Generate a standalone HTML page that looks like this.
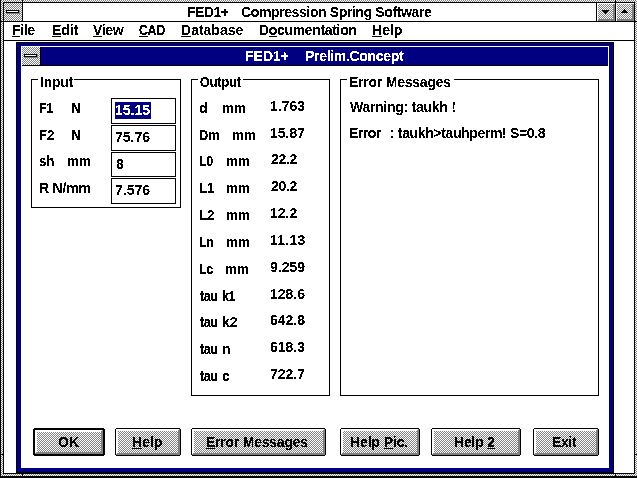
<!DOCTYPE html>
<html><head><meta charset="utf-8"><title>FED1+ Compression Spring Software</title>
<style>
html,body{margin:0;padding:0}
body{width:637px;height:478px;overflow:hidden;position:relative;background:#fff;font:bold 14px/16px 'Liberation Sans',sans-serif;color:#000}
.d{background-color:#c0c0c0;background-image:repeating-conic-gradient(#808080 0% 25%,#fff 0% 50%);background-size:2px 2px;background-position:0 0}
div,span,i,b{position:absolute;box-sizing:border-box;display:block}
.o{background-position:1px 0}
.k{background:#000}.w{background:#fff}.n{background:#000080}.g{background:#808080}
.t{white-space:pre;height:16px;transform-origin:0 0;filter:url(#th)}
.s{filter:url(#th2)}
u{text-decoration:underline;text-decoration-thickness:1px;text-underline-offset:1px;text-decoration-skip-ink:none}
.grp{border:1px solid #000}
.ed{border:1px solid #000;background:#fff}
.btn{border:1px solid #000;border-radius:1px}
</style></head><body>
<!-- outer frame -->
<div class="d" style="left:0px;top:0px;width:637px;height:478px"></div>
<div class="k" style="left:0;top:0;width:1px;height:478px"></div>
<div class="k" style="left:0;top:476px;width:637px;height:2px"></div>
<div class="k" style="left:22px;top:0;width:1px;height:2px"></div>
<div class="k" style="left:615px;top:0;width:1px;height:2px"></div>
<div class="k" style="left:22px;top:474px;width:1px;height:2px"></div>
<div class="k" style="left:615px;top:474px;width:1px;height:2px"></div>
<div class="k" style="left:1px;top:21px;width:2px;height:1px"></div>
<div class="k" style="left:1px;top:454px;width:2px;height:1px"></div>
<div class="k" style="left:635px;top:21px;width:2px;height:1px"></div>
<div class="k" style="left:635px;top:454px;width:2px;height:1px"></div>
<div class="w" style="left:3px;top:2px;width:632px;height:472px;border:1px solid #000"></div>
<!-- main title bar -->
<div class="d o" style="left:4px;top:3px;width:18px;height:18px"></div>
<div class="g" style="left:7px;top:11px;width:13px;height:3px"></div>
<div class="k" style="left:6px;top:10px;width:13px;height:3px"></div>
<div class="w" style="left:7px;top:11px;width:11px;height:1px"></div>
<div class="k" style="left:22px;top:3px;width:1px;height:18px"></div>
<div class="k" style="left:596px;top:3px;width:1px;height:18px"></div>
<div class="k" style="left:615px;top:3px;width:1px;height:18px"></div>
<div class="k" style="left:4px;top:21px;width:630px;height:1px"></div>
<!-- min button -->
<div class="d" style="left:597px;top:3px;width:18px;height:18px"></div>
<div class="w" style="left:597px;top:3px;width:18px;height:1px"></div>
<div class="w" style="left:597px;top:3px;width:1px;height:18px"></div>
<div class="g" style="left:613px;top:4px;width:2px;height:17px"></div>
<div class="g" style="left:598px;top:19px;width:17px;height:2px"></div>
<svg style="position:absolute;left:602px;top:10px" width="7" height="4" shape-rendering="crispEdges"><path d="M0 0h7v1h-7zM1 1h5v1h-5zM2 2h3v1h-3zM3 3h1v1h-1z" fill="#000"/></svg>
<!-- max button -->
<div class="d o" style="left:616px;top:3px;width:18px;height:18px"></div>
<div class="w" style="left:616px;top:3px;width:18px;height:1px"></div>
<div class="w" style="left:616px;top:3px;width:1px;height:18px"></div>
<div class="g" style="left:632px;top:4px;width:2px;height:17px"></div>
<div class="g" style="left:617px;top:19px;width:17px;height:2px"></div>
<svg style="position:absolute;left:621px;top:9px" width="7" height="4" shape-rendering="crispEdges"><path d="M3 0h1v1h-1zM2 1h3v1h-3zM1 2h5v1h-5zM0 3h7v1h-7z" fill="#000"/></svg>
<!-- menu bar line -->
<div class="k" style="left:4px;top:40px;width:630px;height:1px"></div>
<!-- dialog -->
<div class="n" style="left:16px;top:42px;width:598px;height:431px;border:1px solid #000"></div>
<div class="w" style="left:21px;top:46px;width:588px;height:422px"></div>
<div class="n" style="left:41px;top:47px;width:567px;height:18px"></div>
<div class="d o" style="left:22px;top:47px;width:18px;height:18px"></div>
<div class="k" style="left:40px;top:47px;width:1px;height:18px"></div>
<div class="k" style="left:22px;top:65px;width:586px;height:1px"></div>
<div class="g" style="left:25px;top:55px;width:13px;height:3px"></div>
<div class="k" style="left:24px;top:54px;width:13px;height:3px"></div>
<div class="w" style="left:25px;top:55px;width:11px;height:1px"></div>
<!-- group boxes -->
<div class="grp" style="left:31px;top:79px;width:150px;height:129px"></div>
<div class="w" style="left:38px;top:79px;width:36px;height:1px"></div>
<div class="grp" style="left:191px;top:79px;width:139px;height:317px"></div>
<div class="w" style="left:198px;top:79px;width:45px;height:1px"></div>
<div class="grp" style="left:340px;top:79px;width:259px;height:317px"></div>
<div class="w" style="left:347px;top:79px;width:107px;height:1px"></div>
<!-- edits -->
<div class="ed" style="left:111px;top:98px;width:65px;height:26px"></div>
<div class="n" style="left:115px;top:102px;width:36px;height:17px"></div>
<div class="ed" style="left:111px;top:125px;width:65px;height:26px"></div>
<div class="ed" style="left:111px;top:152px;width:65px;height:25px"></div>
<div class="ed" style="left:111px;top:178px;width:65px;height:26px"></div>
<!-- buttons -->
<div class="k" style="left:34px;top:428px;width:70px;height:1px"></div>
<div class="k" style="left:34px;top:455px;width:70px;height:1px"></div>
<div class="k" style="left:33px;top:429px;width:1px;height:26px"></div>
<div class="k" style="left:104px;top:429px;width:1px;height:26px"></div>
<div class="k" style="left:34px;top:429px;width:70px;height:1px"></div>
<div class="k" style="left:34px;top:454px;width:70px;height:1px"></div>
<div class="k" style="left:34px;top:429px;width:1px;height:26px"></div>
<div class="k" style="left:103px;top:429px;width:1px;height:26px"></div>
<div class="w" style="left:35px;top:430px;width:68px;height:24px"></div>
<div class="g" style="left:35px;top:453px;width:68px;height:1px"></div>
<div class="g" style="left:36px;top:452px;width:67px;height:1px"></div>
<div class="g" style="left:102px;top:430px;width:1px;height:24px"></div>
<div class="g" style="left:101px;top:431px;width:1px;height:23px"></div>
<div class="d o" style="left:37px;top:432px;width:64px;height:20px"></div>
<div class="k" style="left:116px;top:428px;width:64px;height:1px"></div>
<div class="k" style="left:116px;top:455px;width:64px;height:1px"></div>
<div class="k" style="left:115px;top:429px;width:1px;height:26px"></div>
<div class="k" style="left:180px;top:429px;width:1px;height:26px"></div>
<div class="w" style="left:116px;top:429px;width:64px;height:26px"></div>
<div class="g" style="left:116px;top:454px;width:64px;height:1px"></div>
<div class="g" style="left:117px;top:453px;width:63px;height:1px"></div>
<div class="g" style="left:179px;top:429px;width:1px;height:26px"></div>
<div class="g" style="left:178px;top:430px;width:1px;height:25px"></div>
<div class="d o" style="left:118px;top:431px;width:60px;height:22px"></div>
<div class="k" style="left:192px;top:428px;width:133px;height:1px"></div>
<div class="k" style="left:192px;top:455px;width:133px;height:1px"></div>
<div class="k" style="left:191px;top:429px;width:1px;height:26px"></div>
<div class="k" style="left:325px;top:429px;width:1px;height:26px"></div>
<div class="w" style="left:192px;top:429px;width:133px;height:26px"></div>
<div class="g" style="left:192px;top:454px;width:133px;height:1px"></div>
<div class="g" style="left:193px;top:453px;width:132px;height:1px"></div>
<div class="g" style="left:324px;top:429px;width:1px;height:26px"></div>
<div class="g" style="left:323px;top:430px;width:1px;height:25px"></div>
<div class="d o" style="left:194px;top:431px;width:129px;height:22px"></div>
<div class="k" style="left:341px;top:428px;width:78px;height:1px"></div>
<div class="k" style="left:341px;top:455px;width:78px;height:1px"></div>
<div class="k" style="left:340px;top:429px;width:1px;height:26px"></div>
<div class="k" style="left:419px;top:429px;width:1px;height:26px"></div>
<div class="w" style="left:341px;top:429px;width:78px;height:26px"></div>
<div class="g" style="left:341px;top:454px;width:78px;height:1px"></div>
<div class="g" style="left:342px;top:453px;width:77px;height:1px"></div>
<div class="g" style="left:418px;top:429px;width:1px;height:26px"></div>
<div class="g" style="left:417px;top:430px;width:1px;height:25px"></div>
<div class="d" style="left:343px;top:431px;width:74px;height:22px"></div>
<div class="k" style="left:432px;top:428px;width:88px;height:1px"></div>
<div class="k" style="left:432px;top:455px;width:88px;height:1px"></div>
<div class="k" style="left:431px;top:429px;width:1px;height:26px"></div>
<div class="k" style="left:520px;top:429px;width:1px;height:26px"></div>
<div class="w" style="left:432px;top:429px;width:88px;height:26px"></div>
<div class="g" style="left:432px;top:454px;width:88px;height:1px"></div>
<div class="g" style="left:433px;top:453px;width:87px;height:1px"></div>
<div class="g" style="left:519px;top:429px;width:1px;height:26px"></div>
<div class="g" style="left:518px;top:430px;width:1px;height:25px"></div>
<div class="d o" style="left:434px;top:431px;width:84px;height:22px"></div>
<div class="k" style="left:534px;top:428px;width:64px;height:1px"></div>
<div class="k" style="left:534px;top:455px;width:64px;height:1px"></div>
<div class="k" style="left:533px;top:429px;width:1px;height:26px"></div>
<div class="k" style="left:598px;top:429px;width:1px;height:26px"></div>
<div class="w" style="left:534px;top:429px;width:64px;height:26px"></div>
<div class="g" style="left:534px;top:454px;width:64px;height:1px"></div>
<div class="g" style="left:535px;top:453px;width:63px;height:1px"></div>
<div class="g" style="left:597px;top:429px;width:1px;height:26px"></div>
<div class="g" style="left:596px;top:430px;width:1px;height:25px"></div>
<div class="d o" style="left:536px;top:431px;width:60px;height:22px"></div>
<svg width="0" height="0" style="position:absolute"><defs>
<filter id="th" x="0" y="0" width="100%" height="100%" color-interpolation-filters="sRGB"><feComponentTransfer><feFuncA type="discrete" tableValues="0 0 0 0 0 0 0 1 1 1 1 1 1 1 1"/></feComponentTransfer></filter>
<filter id="th2" x="0" y="0" width="100%" height="100%" color-interpolation-filters="sRGB"><feComponentTransfer><feFuncA type="discrete" tableValues="0 0 1 1 1"/></feComponentTransfer></filter>
</defs></svg>
<div id="tx" style="left:0;top:0;width:637px;height:478px">
<span class="t" style="left:187px;top:4px;letter-spacing:-0.50px;">FED1+</span>
<span class="t" style="left:241px;top:4px;letter-spacing:-0.38px;">Compression Spring Software</span>
<span class="t" style="left:12px;top:22px;letter-spacing:-0.33px;"><u>F</u>ile</span>
<span class="t" style="left:52px;top:22px;"><u>E</u>dit</span>
<span class="t" style="left:93px;top:22px;letter-spacing:-0.33px;"><u>V</u>iew</span>
<span class="t s" style="left:139.11px;top:22px;transform:scaleX(0.890);letter-spacing:-0.46px;"><u>C</u>AD</span>
<span class="t" style="left:181px;top:22px;"><u>D</u>atabase</span>
<span class="t" style="left:259px;top:22px;letter-spacing:-0.33px;">D<u>o</u>cumentation</span>
<span class="t" style="left:372px;top:22px;"><u>H</u>elp</span>
<span class="t" style="left:245px;top:48px;color:#fff;">FED1+</span>
<span class="t" style="left:305px;top:48px;letter-spacing:-0.31px;color:#fff;">Prelim.Concept</span>
<span class="t" style="left:40px;top:74px;letter-spacing:-0.25px;">Input</span>
<span class="t s" style="left:200.11px;top:74px;transform:scaleX(0.890);letter-spacing:-0.01px;">Output</span>
<span class="t" style="left:349px;top:74px;letter-spacing:-0.23px;">Error Messages</span>
<span class="t s" style="left:39.11px;top:100px;transform:scaleX(0.890);letter-spacing:-0.39px;">F1</span>
<span class="t" style="left:71px;top:100px;">N</span>
<span class="t s" style="left:39.07px;top:127px;transform:scaleX(0.933);">F2</span>
<span class="t" style="left:71px;top:127px;">N</span>
<span class="t s" style="left:39.07px;top:153px;transform:scaleX(0.933);">sh</span>
<span class="t s" style="left:67.04px;top:153px;transform:scaleX(0.957);">mm</span>
<span class="t" style="left:39px;top:180px;letter-spacing:-0.20px;">R N/mm</span>
<span class="t" style="left:115px;top:102px;color:#fff;">15.15</span>
<span class="t" style="left:115px;top:129px;">75.76</span>
<span class="t" style="left:116px;top:156px;">8</span>
<span class="t" style="left:115px;top:182px;">7.576</span>
<span class="t" style="left:199px;top:100px;">d</span>
<span class="t s" style="left:222.04px;top:100px;transform:scaleX(0.957);">mm</span>
<span class="t" style="left:270px;top:98px;">1.763</span>
<span class="t s" style="left:199.10px;top:127px;transform:scaleX(0.905);">Dm</span>
<span class="t s" style="left:232.04px;top:127px;transform:scaleX(0.957);">mm</span>
<span class="t" style="left:270px;top:125px;">15.87</span>
<span class="t s" style="left:199.11px;top:153px;transform:scaleX(0.890);letter-spacing:-0.39px;">L0</span>
<span class="t s" style="left:226.04px;top:153px;transform:scaleX(0.957);">mm</span>
<span class="t" style="left:271px;top:151px;letter-spacing:-0.33px;">22.2</span>
<span class="t s" style="left:199.07px;top:180px;transform:scaleX(0.933);">L1</span>
<span class="t s" style="left:226.04px;top:180px;transform:scaleX(0.957);">mm</span>
<span class="t" style="left:271px;top:178px;letter-spacing:-0.33px;">20.2</span>
<span class="t s" style="left:199.07px;top:207px;transform:scaleX(0.933);">L2</span>
<span class="t s" style="left:226.04px;top:207px;transform:scaleX(0.957);">mm</span>
<span class="t" style="left:270px;top:205px;">12.2</span>
<span class="t s" style="left:199.11px;top:234px;transform:scaleX(0.890);letter-spacing:-0.39px;">Ln</span>
<span class="t s" style="left:226.04px;top:234px;transform:scaleX(0.957);">mm</span>
<span class="t" style="left:270px;top:232px;letter-spacing:0.25px;">11.13</span>
<span class="t s" style="left:199.11px;top:261px;transform:scaleX(0.890);letter-spacing:-0.39px;">Lc</span>
<span class="t s" style="left:225.04px;top:261px;transform:scaleX(0.957);">mm</span>
<span class="t" style="left:270px;top:259px;">9.259</span>
<span class="t s" style="left:200.00px;top:288px;transform:scaleX(0.890);letter-spacing:-0.45px;">tau</span>
<span class="t s" style="left:222.11px;top:288px;transform:scaleX(0.890);letter-spacing:-0.52px;">k1</span>
<span class="t" style="left:270px;top:286px;">128.6</span>
<span class="t s" style="left:200.00px;top:314px;transform:scaleX(0.890);letter-spacing:-0.45px;">tau</span>
<span class="t" style="left:222px;top:314px;">k2</span>
<span class="t" style="left:270px;top:312px;">642.8</span>
<span class="t s" style="left:200.00px;top:341px;transform:scaleX(0.890);letter-spacing:-0.45px;">tau</span>
<span class="t" style="left:222px;top:341px;">n</span>
<span class="t" style="left:270px;top:339px;">618.3</span>
<span class="t s" style="left:200.00px;top:368px;transform:scaleX(0.890);letter-spacing:-0.45px;">tau</span>
<span class="t" style="left:222px;top:368px;">c</span>
<span class="t" style="left:270px;top:366px;">722.7</span>
<span class="t" style="left:350px;top:99px;letter-spacing:-0.27px;">Warning: taukh !</span>
<span class="t" style="left:349px;top:125px;letter-spacing:-0.50px;">Error</span>
<span class="t" style="left:390px;top:125px;letter-spacing:-0.36px;">: taukh&gt;tauhperm! S=0.8</span>
<span class="t" style="left:58px;top:434px;">OK</span>
<span class="t" style="left:132px;top:434px;"><u>H</u>elp</span>
<span class="t" style="left:206px;top:434px;letter-spacing:-0.23px;"><u>E</u>rror Messages</span>
<span class="t" style="left:350px;top:434px;letter-spacing:-0.12px;">Help <u>P</u>ic.</span>
<span class="t" style="left:454px;top:434px;letter-spacing:-0.20px;">Help <u>2</u></span>
<span class="t" style="left:552px;top:434px;letter-spacing:-0.33px;">Exit</span>
</div>
</body></html>
